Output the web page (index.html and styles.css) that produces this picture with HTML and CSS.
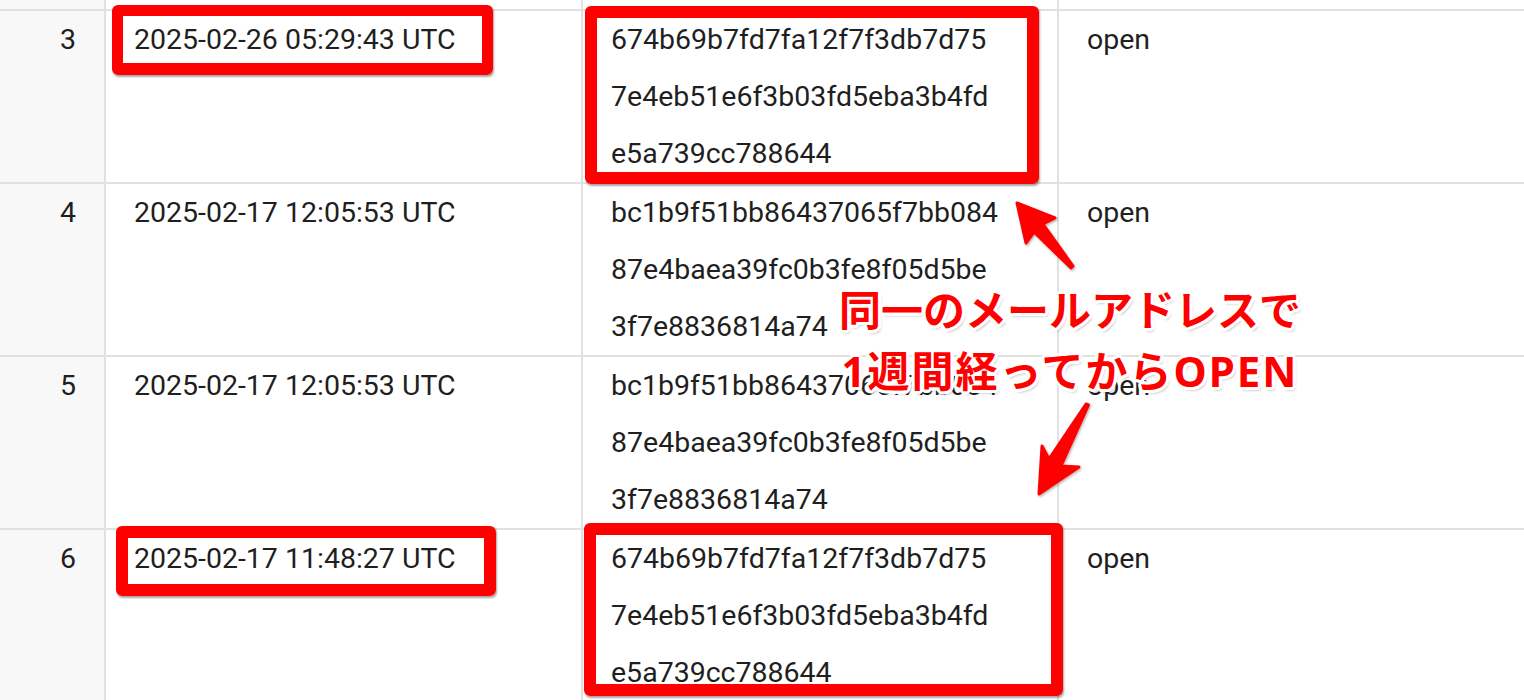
FILE: index.html
```html
<!DOCTYPE html>
<html lang="ja">
<head>
<meta charset="utf-8">
<title>Open log</title>
<link rel="stylesheet" href="styles.css">
</head>
<body>
<div class="page">
  <div class="sheet">
    <div class="row row-tail">
      <div class="cell num"></div>
      <div class="cell"></div>
      <div class="cell"></div>
      <div class="cell"></div>
    </div>
    <div class="row">
      <div class="cell num">3</div>
      <div class="cell">2025-02-26 05:29:43 UTC</div>
      <div class="cell hash"><span>674b69b7fd7fa12f7f3db7d75</span><span>7e4eb51e6f3b03fd5eba3b4fd</span><span>e5a739cc788644</span></div>
      <div class="cell">open</div>
    </div>
    <div class="row">
      <div class="cell num">4</div>
      <div class="cell">2025-02-17 12:05:53 UTC</div>
      <div class="cell hash"><span>bc1b9f51bb86437065f7bb084</span><span>87e4baea39fc0b3fe8f05d5be</span><span>3f7e8836814a74</span></div>
      <div class="cell">open</div>
    </div>
    <div class="row">
      <div class="cell num">5</div>
      <div class="cell">2025-02-17 12:05:53 UTC</div>
      <div class="cell hash"><span>bc1b9f51bb86437065f7bb084</span><span>87e4baea39fc0b3fe8f05d5be</span><span>3f7e8836814a74</span></div>
      <div class="cell">open</div>
    </div>
    <div class="row">
      <div class="cell num">6</div>
      <div class="cell">2025-02-17 11:48:27 UTC</div>
      <div class="cell hash"><span>674b69b7fd7fa12f7f3db7d75</span><span>7e4eb51e6f3b03fd5eba3b4fd</span><span>e5a739cc788644</span></div>
      <div class="cell">open</div>
    </div>
  </div>

  <div class="mark mark-date1"></div>
  <div class="mark mark-hash1"></div>
  <div class="mark mark-date2"></div>
  <div class="mark mark-hash2"></div>

  <svg class="arrows" width="1524" height="700" viewBox="0 0 1524 700" aria-hidden="true">
    <defs>
      <filter id="ash" x="-20%" y="-20%" width="140%" height="140%">
        <feDropShadow dx="1" dy="1.5" stdDeviation="1.2" flood-color="#000" flood-opacity="0.3"/>
      </filter>
    </defs>
    <path class="arrow" filter="url(#ash)" d="M1017 203 L1055 218 L1043 224 L1073 266 L1071 268 L1034 232 L1026 243 Z"/>
    <path class="arrow" filter="url(#ash)" d="M1039 494 L1042 446 L1049 459 L1086 404 L1088.5 405 L1061 466 L1079 467 Z"/>
  </svg>

  <div class="caption">
    <div>同一のメールアドレスで</div>
    <div class="caption-line2">1週間経ってからOPEN</div>
  </div>
</div>
</body>
</html>
```

FILE: styles.css
```css
html, body {
  margin: 0;
  padding: 0;
  background: #ffffff;
}

body {
  width: 1524px;
  height: 700px;
  overflow: hidden;
  font-family: Roboto, "Noto Sans CJK JP", sans-serif;
  color: #1f1f1f;
}

.page {
  position: relative;
  width: 1524px;
  height: 700px;
  overflow: hidden;
}

.sheet {
  display: flex;
  flex-direction: column;
}

.row {
  display: grid;
  grid-template-columns: 104px 477px 476px 1fr;
  height: 173px;
  border-top: 2px solid #e1e1e1;
  box-sizing: border-box;
}

.row-tail {
  height: 9px;
  border-top: none;
}

.cell {
  border-left: 2px solid #e1e1e1;
  padding: 0 0 0 28px;
  font-size: 28.5px;
  line-height: 57px;
  white-space: nowrap;
  overflow: hidden;
}

.cell.num {
  border-left: none;
  background: #f8f8f8;
  text-align: right;
  padding: 0 28px 0 0;
}

.hash {
  display: flex;
  flex-direction: column;
}

.hash span {
  display: block;
}

.mark {
  position: absolute;
  box-sizing: border-box;
  border: 12px solid #ff0000;
  border-radius: 6px;
  box-shadow: 1px 1.5px 2px rgba(0, 0, 0, 0.35);
}

.mark-date1 {
  left: 112px;
  top: 5px;
  width: 381px;
  height: 70px;
  border-width: 11px 11px 12px 11px;
}

.mark-hash1 {
  left: 585px;
  top: 6px;
  width: 454px;
  height: 178px;
}

.mark-date2 {
  left: 116px;
  top: 526px;
  width: 380px;
  height: 70px;
}

.mark-hash2 {
  left: 584px;
  top: 523px;
  width: 479px;
  height: 173px;
}

.arrows {
  position: absolute;
  left: 0;
  top: 0;
}

.arrow {
  fill: #ff0000;
  stroke: #ff0000;
  stroke-width: 3;
  stroke-linejoin: round;
}

.caption {
  position: absolute;
  left: 810px;
  top: 279px;
  width: 520px;
  text-align: center;
  font-family: "Noto Sans", "Noto Sans CJK JP", sans-serif;
  font-weight: 700;
  font-size: 42px;
  line-height: 61px;
  color: #ff0000;
  text-shadow:
    3px 0 0 #fff, -3px 0 0 #fff, 0 3px 0 #fff, 0 -3px 0 #fff,
    2px 2px 0 #fff, -2px 2px 0 #fff, 2px -2px 0 #fff, -2px -2px 0 #fff,
    3px 1px 0 #fff, -3px 1px 0 #fff, 1px 3px 0 #fff, 1px -3px 0 #fff,
    3px -1px 0 #fff, -3px -1px 0 #fff, -1px 3px 0 #fff, -1px -3px 0 #fff,
    2px 3px 3px rgba(0, 0, 0, 0.35);
}

.caption-line2 {
  letter-spacing: 2px;
}
```
